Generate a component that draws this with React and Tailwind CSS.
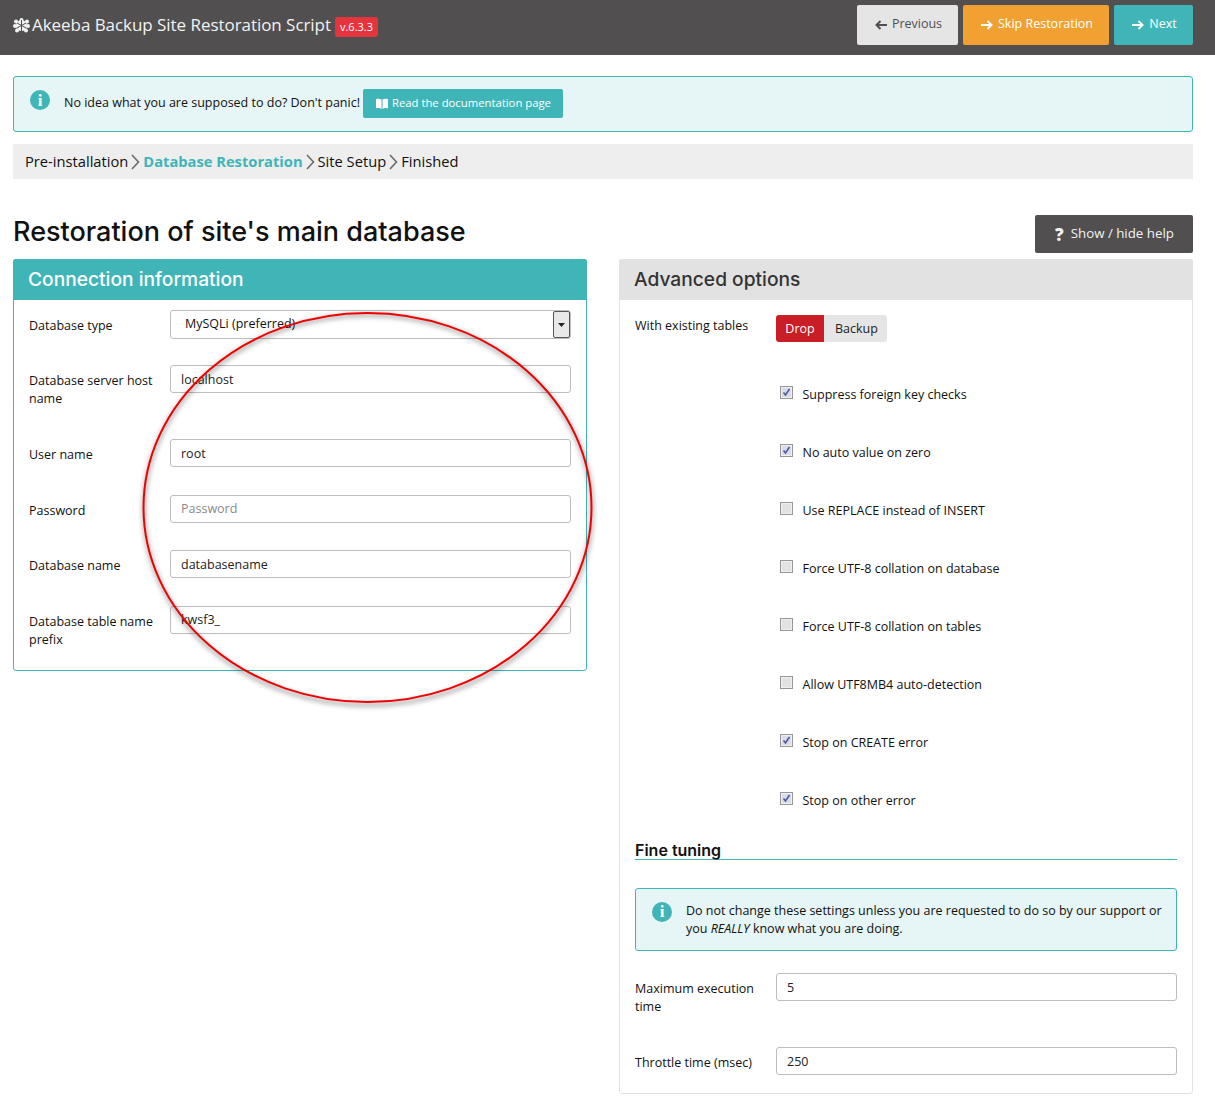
const Arrow = ({ left }) => (
  <svg width="12" height="10" viewBox="0 0 12 10" className={`mt-[2px] ${left ? 'rotate-180' : ''}`}>
    <path d="M0 5h10M6.5 1l4 4-4 4" fill="none" stroke="currentColor" strokeWidth="2" />
  </svg>
)

const Info = ({ className }) => (
  <span className={`flex items-center justify-center rounded-full bg-[#40b5b8] text-white font-bold font-['Liberation_Serif',serif] w-[20px] h-[20px] text-[17px] leading-none shrink-0 ${className}`}>
    i
  </span>
)

const Book = () => (
  <svg width="12" height="11" viewBox="0 0 12 11">
    <path d="M0 1.2C2 .4 4 .6 5.5 1.6V11C4 10 2 9.8 0 10.5zM12 1.2C10 .4 8 .6 6.5 1.6V11C8 10 10 9.8 12 10.5z" fill="#fff" />
  </svg>
)

const Logo = () => (
  <svg width="17" height="15" viewBox="0 0 17 15" className="mr-[2px]">
    <g fill="#f2f2f2">
      <circle cx="8.5" cy="7.5" r="5.5" />
      <circle cx="3" cy="3.5" r="2" />
      <circle cx="14" cy="3.5" r="2" />
      <circle cx="2" cy="8" r="2" />
      <circle cx="15" cy="8" r="2" />
      <circle cx="4" cy="12.5" r="2" />
      <circle cx="13" cy="12.5" r="2" />
      <circle cx="8.5" cy="2" r="2" />
    </g>
    <path d="M8.5 2v11M4 5l9 5M13 5l-9 5" stroke="#514f50" strokeWidth="1" />
  </svg>
)

const Field = ({ label, value, placeholder, rowClass, raised }) => (
  <div className={`flex items-start ${rowClass}`}>
    <label className="w-[141px] shrink-0 pt-[7px] pr-2 leading-[18px]">{label}</label>
    <input
      readOnly
      value={value}
      placeholder={placeholder}
      className={`flex-1 min-w-0 h-[28px] border border-[#bdbdbd] rounded-[3px] px-[10px] text-[12.5px] text-[#222] placeholder:text-[#8a8a8a] outline-none bg-white ${raised ? 'pb-[2px]' : ''}`}
    />
  </div>
)

const Check = ({ label, checked }) => (
  <div className="flex items-center h-[58px] pl-[145px]">
    <span className={`flex items-center justify-center w-[13px] h-[13px] border border-[#969696] mr-[9.5px] mb-[2px] shadow-[inset_0_0_0_1px_#f0f0f0] ${checked ? 'bg-[#d9dce8]' : 'bg-[#e2e2e2]'}`}>
      {checked && (
        <svg width="9" height="9" viewBox="0 0 9 9">
          <path d="M1.5 4.5l2 2.5 4-6" fill="none" stroke="#4a5a9c" strokeWidth="1.6" />
        </svg>
      )}
    </span>
    <span className="pt-[5px]">{label}</span>
  </div>
)

const checks = [
  ['Suppress foreign key checks', true],
  ['No auto value on zero', true],
  ['Use REPLACE instead of INSERT', false],
  ['Force UTF-8 collation on database', false],
  ['Force UTF-8 collation on tables', false],
  ['Allow UTF8MB4 auto-detection', false],
  ['Stop on CREATE error', true],
  ['Stop on other error', true],
]

const Chevron = () => (
  <svg width="9" height="16" viewBox="0 0 9 16" className="mx-[3px] inline-block">
    <path d="M1 1l6.5 7L1 15" fill="none" stroke="#6b6b6b" strokeWidth="1.6" />
  </svg>
)

export default function App() {
  return (
    <div className="relative w-[1215px] h-[1113px] overflow-hidden bg-white text-[12.5px] text-[#111] font-['Open_Sans',sans-serif]">
      <header className="h-[55px] bg-[#514f50] flex items-start justify-between pl-[13px] pr-[22px] pt-[5px]">
        <div className="flex items-center h-[40px] text-white">
          <Logo />
          <span className="text-[17px] tracking-[-0.05px] text-[#f2f2f2]">Akeeba Backup Site Restoration Script</span>
          <span className="ml-[4px] mt-[4px] bg-[#e6343f] text-white text-[11px] rounded-[3px] px-[5px] h-[20px] leading-[20px]">v.6.3.3</span>
        </div>
        <div className="flex gap-[5px]">
          <button className="h-[40px] w-[101px] pb-[2px] pl-[2px] rounded-[2px] bg-[#e5e5e5] text-[#514f50] flex items-center justify-center gap-[5px]"><Arrow left />Previous</button>
          <button className="h-[40px] w-[146px] pb-[2px] pl-[2px] rounded-[2px] bg-[#f0a131] text-white flex items-center justify-center gap-[5px]"><Arrow />Skip Restoration</button>
          <button className="h-[40px] w-[79px] pb-[2px] pl-[2px] rounded-[2px] bg-[#40b5b8] text-white flex items-center justify-center gap-[5px]"><Arrow />Next</button>
        </div>
      </header>

      <main className="px-[13px] w-[1193px] box-content">
        <div className="mt-[21px] w-[1180px] h-[56px] border border-[#40b5b8] rounded-[3px] bg-[#e6f5f5] flex items-center pl-[16px]">
          <Info className="mb-[8px]" />
          <span className="ml-[14px] mr-[3px] pb-[2px]">No idea what you are supposed to do? Don't panic!</span>
          <span className="h-[29px] pl-[13px] pr-[12px] mb-[2px] rounded-[2px] bg-[#40b5b8] text-white text-[11.3px] flex items-center gap-[4px]">
            <Book />
            Read the documentation page
          </span>
        </div>

        <div className="mt-[12px] w-[1180px] h-[35px] bg-[#eeeeee] pl-[12px] flex items-center text-[14.7px]">
          Pre-installation<Chevron />
          <b className="text-[#40b5b8] font-bold">Database Restoration</b><Chevron />
          Site Setup<Chevron />
          Finished
        </div>

        <div className="w-[1180px] mt-[36px] h-[44px] flex items-start justify-between">
          <h1 className="pt-px text-[27px] leading-[32px] font-medium text-[#111] font-['Inter',sans-serif]">Restoration of site's main database</h1>
          <button className="w-[158px] h-[38px] pl-px rounded-[2px] bg-[#514f50] text-[#f2f2f2] text-[13.3px] flex items-center justify-center gap-[7px]">
            <span className="font-extrabold text-[17px] leading-none">?</span>Show / hide help
          </button>
        </div>

        <div className="w-[1180px] flex items-start justify-between">
          <section className="w-[574px] h-[412px] border border-[#40b5b8] rounded-[3px]">
            <h2 className="h-[41px] -mx-px -mt-px bg-[#40b5b8] rounded-t-[3px] pl-[15px] flex items-center text-white text-[19.2px] font-medium font-['Inter',sans-serif]">Connection information</h2>
            <div className="px-[15px] pt-[10px]">
              <div className="flex items-start h-[55px]">
                <label className="w-[141px] shrink-0 pt-[7px] leading-[18px]">Database type</label>
                <div className="flex-1 h-[29px] border border-[#bdbdbd] rounded-[3px] pl-[14px] flex items-center justify-between">
                  <span>MySQLi (preferred)</span>
                  <span className="w-[17px] h-[27px] border border-[#555] rounded-[2px] bg-[#e8e8e8] flex items-center justify-center">
                    <svg width="7" height="4" viewBox="0 0 7 4"><path d="M0 0h7L3.5 4z" fill="#222" /></svg>
                  </span>
                </div>
              </div>
              <Field label="Database server host name" value="localhost" rowClass="h-[74px]" />
              <Field label="User name" value="root" rowClass="h-[56px]" />
              <Field label="Password" value="" placeholder="Password" rowClass="h-[55px]" raised />
              <Field label="Database name" value="databasename" rowClass="h-[56px]" />
              <Field label="Database table name prefix" value="kwsf3_" rowClass="h-[50px]" raised />
            </div>
          </section>

          <section className="w-[574px] h-[835px] border border-[#e2e2e2] rounded-[3px]">
            <h2 className="h-[41px] -mx-px -mt-px bg-[#e2e2e2] rounded-t-[3px] pl-[15px] flex items-center text-[#333] text-[19.2px] font-medium font-['Inter',sans-serif]">Advanced options</h2>
            <div className="px-[15px]">
              <div className="flex items-start pt-[15px] h-[56px]">
                <label className="w-[141px] shrink-0 pt-[2px] leading-[18px]">With existing tables</label>
                <div className="flex h-[27px]">
                  <span className="w-[48px] pt-[2px] bg-[#c91e25] text-white rounded-l-[3px] flex items-center justify-center">Drop</span>
                  <span className="w-[63px] pt-[2px] pl-[2px] bg-[#e5e5e5] text-[#222] rounded-r-[3px] flex items-center justify-center">Backup</span>
                </div>
              </div>
              <div className="pt-[8px]">
                {checks.map(([label, on]) => <Check key={label} label={label} checked={on} />)}
              </div>
              <h3 className="mt-[13px] h-[18px] leading-[18px] border-b border-[#40b5b8] box-content text-[16px] font-semibold text-[#111] font-['Inter',sans-serif]">Fine tuning</h3>
              <div className="mt-[28px] h-[63px] border border-[#40b5b8] rounded-[3px] bg-[#e6f5f5] flex items-center pl-[16px] pr-[10px]">
                <Info className="mb-[16px]" />
                <p className="ml-[14px] leading-[18px]">Do not change these settings unless you are requested to do so by our support or you <i>REALLY</i> know what you are doing.</p>
              </div>
              <Field label="Maximum execution time" value="5" rowClass="mt-[22px] h-[74px]" />
              <Field label="Throttle time (msec)" value="250" rowClass="h-[28px]" />
            </div>
          </section>
        </div>
      </main>

      {/* hand drawn red circle on top of the form */}
      <svg className="absolute left-[130px] top-[300px] pointer-events-none" width="480" height="420" viewBox="0 0 480 420">
        <defs>
          <filter id="ringShadow" x="-10%" y="-10%" width="120%" height="120%">
            <feGaussianBlur stdDeviation="2.5" />
          </filter>
        </defs>
        <ellipse cx="238" cy="210" rx="224" ry="195" fill="none" stroke="#000" strokeOpacity="0.4" strokeWidth="3" filter="url(#ringShadow)" />
        <ellipse cx="237.5" cy="207.5" rx="224" ry="194.5" fill="none" stroke="#f00000" strokeWidth="2" />
      </svg>
    </div>
  )
}
